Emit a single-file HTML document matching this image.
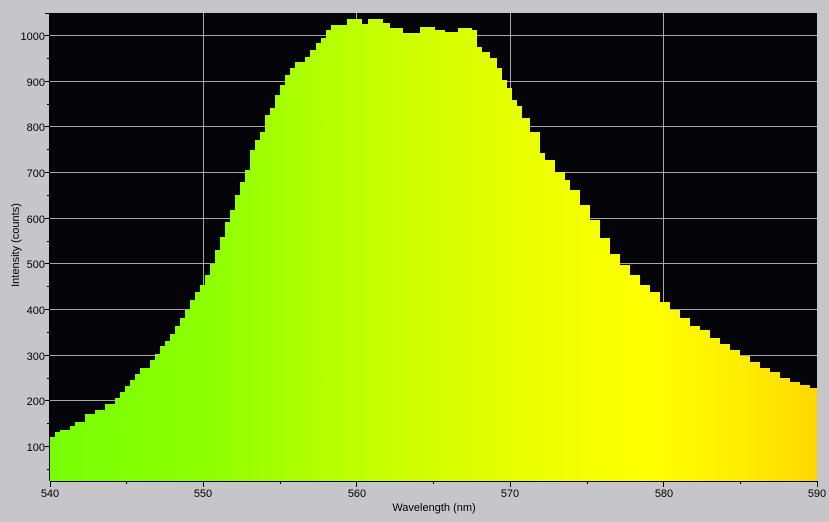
<!DOCTYPE html>
<html><head><style>
html,body{margin:0;padding:0;width:829px;height:522px;overflow:hidden;background:#c6c6ca;}
svg{display:block;font-family:"Liberation Sans",sans-serif;}
</style></head><body>
<svg width="829" height="522" viewBox="0 0 829 522" xmlns="http://www.w3.org/2000/svg">
<defs>
<linearGradient id="g" x1="50" y1="0" x2="817" y2="0" gradientUnits="userSpaceOnUse">
<stop offset="0" stop-color="#78ff06"/>
<stop offset="0.2" stop-color="#8cff00"/>
<stop offset="0.42" stop-color="#c4ff00"/>
<stop offset="0.62" stop-color="#eaff00"/>
<stop offset="0.78" stop-color="#ffff00"/>
<stop offset="0.9" stop-color="#ffee00"/>
<stop offset="1" stop-color="#ffd800"/>
</linearGradient>
</defs>
<rect x="50" y="13" width="767" height="468" fill="#050509"/>
<g stroke="#a8a8a8" stroke-width="1">
<line x1="203.5" y1="13" x2="203.5" y2="481"/><line x1="356.5" y1="13" x2="356.5" y2="481"/>
<line x1="510.5" y1="13" x2="510.5" y2="481"/><line x1="663.5" y1="13" x2="663.5" y2="481"/>
<line x1="50" y1="35.5" x2="817" y2="35.5"/><line x1="50" y1="81.5" x2="817" y2="81.5"/>
<line x1="50" y1="126.5" x2="817" y2="126.5"/><line x1="50" y1="172.5" x2="817" y2="172.5"/>
<line x1="50" y1="218.5" x2="817" y2="218.5"/><line x1="50" y1="263.5" x2="817" y2="263.5"/>
<line x1="50" y1="309.5" x2="817" y2="309.5"/><line x1="50" y1="355.5" x2="817" y2="355.5"/>
<line x1="50" y1="400.5" x2="817" y2="400.5"/><line x1="50" y1="446.5" x2="817" y2="446.5"/>
</g>
<polygon fill="url(#g)" points="50,481 50,437 55,437 55,432 60,432 60,430 70,430 70,426 75,426 75,422 85,422 85,414 95,414 95,410 105,410 105,404 115,404 115,398 120,398 120,392 125,392 125,386 130,386 130,380 135,380 135,374 140,374 140,368 150,368 150,360 155,360 155,354 160,354 160,346 165,346 165,341 170,341 170,334 175,334 175,326 180,326 180,318 185,318 185,310 190,310 190,300 195,300 195,292 200,292 200,285 205,285 205,275 210,275 210,264 215,264 215,250 220,250 220,237 225,237 225,222 230,222 230,210 235,210 235,195 240,195 240,182 245,182 245,170 250,170 250,150 255,150 255,140 260,140 260,132 265,132 265,115 270,115 270,108 275,108 275,95 280,95 280,85 285,85 285,75 290,75 290,68 295,68 295,62 305,62 305,57 310,57 310,50 316,50 316,43 321,43 321,38 326,38 326,30 331,30 331,25 347,25 347,19 362,19 362,24 368,24 368,19 383,19 383,23 390,23 390,28 403,28 403,33 420,33 420,27 435,27 435,30 445,30 445,32 458,32 458,28 472,28 472,30 477,30 477,47 482,47 482,52 490,52 490,58 497,58 497,68 502,68 502,80 507,80 507,88 512,88 512,100 517,100 517,106 522,106 522,118 530,118 530,132 540,132 540,153 545,153 545,160 555,160 555,172 565,172 565,180 570,180 570,190 580,190 580,205 590,205 590,220 600,220 600,238 610,238 610,254 620,254 620,265 630,265 630,275 640,275 640,285 650,285 650,292 660,292 660,302 670,302 670,310 680,310 680,318 690,318 690,326 700,326 700,330 710,330 710,338 720,338 720,344 730,344 730,350 740,350 740,356 750,356 750,362 760,362 760,368 770,368 770,372 780,372 780,378 790,378 790,382 800,382 800,385 810,385 810,388 817,388 817,481"/>
<g stroke="#000" stroke-width="1">
<line x1="49.5" y1="13" x2="49.5" y2="481"/>
<line x1="50" y1="481.5" x2="818" y2="481.5"/>
<line x1="45" y1="35.5" x2="50" y2="35.5"/><line x1="45" y1="81.5" x2="50" y2="81.5"/>
<line x1="45" y1="126.5" x2="50" y2="126.5"/><line x1="45" y1="172.5" x2="50" y2="172.5"/>
<line x1="45" y1="218.5" x2="50" y2="218.5"/><line x1="45" y1="263.5" x2="50" y2="263.5"/>
<line x1="45" y1="309.5" x2="50" y2="309.5"/><line x1="45" y1="355.5" x2="50" y2="355.5"/>
<line x1="45" y1="400.5" x2="50" y2="400.5"/><line x1="45" y1="446.5" x2="50" y2="446.5"/>
<line x1="45" y1="13.5" x2="50" y2="13.5"/>
<line x1="47" y1="58.5" x2="50" y2="58.5"/><line x1="47" y1="104.5" x2="50" y2="104.5"/>
<line x1="47" y1="149.5" x2="50" y2="149.5"/><line x1="47" y1="195.5" x2="50" y2="195.5"/>
<line x1="47" y1="241.5" x2="50" y2="241.5"/><line x1="47" y1="286.5" x2="50" y2="286.5"/>
<line x1="47" y1="332.5" x2="50" y2="332.5"/><line x1="47" y1="378.5" x2="50" y2="378.5"/>
<line x1="47" y1="423.5" x2="50" y2="423.5"/><line x1="47" y1="469.5" x2="50" y2="469.5"/>
<line x1="50.5" y1="481" x2="50.5" y2="487"/><line x1="203.5" y1="481" x2="203.5" y2="487"/>
<line x1="356.5" y1="481" x2="356.5" y2="487"/><line x1="510.5" y1="481" x2="510.5" y2="487"/>
<line x1="663.5" y1="481" x2="663.5" y2="487"/><line x1="817.5" y1="481" x2="817.5" y2="487"/>
<line x1="126.5" y1="481" x2="126.5" y2="484"/><line x1="280.5" y1="481" x2="280.5" y2="484"/>
<line x1="433.5" y1="481" x2="433.5" y2="484"/><line x1="587.5" y1="481" x2="587.5" y2="484"/>
<line x1="740.5" y1="481" x2="740.5" y2="484"/>
</g>
<g font-size="11" fill="#000" text-anchor="end">
<text x="45" y="40">1000</text><text x="45" y="86">900</text><text x="45" y="131">800</text>
<text x="45" y="177">700</text><text x="45" y="223">600</text><text x="45" y="268">500</text>
<text x="45" y="314">400</text><text x="45" y="360">300</text><text x="45" y="405">200</text>
<text x="45" y="451">100</text>
</g>
<g font-size="11" fill="#000" text-anchor="middle">
<text x="50" y="497">540</text><text x="203" y="497">550</text><text x="357" y="497">560</text>
<text x="510" y="497">570</text><text x="664" y="497">580</text><text x="817" y="497">590</text>
<text x="434" y="511">Wavelength (nm)</text>
<text transform="translate(19,245) rotate(-90)">Intensity (counts)</text>
</g>
</svg>
</body></html>
